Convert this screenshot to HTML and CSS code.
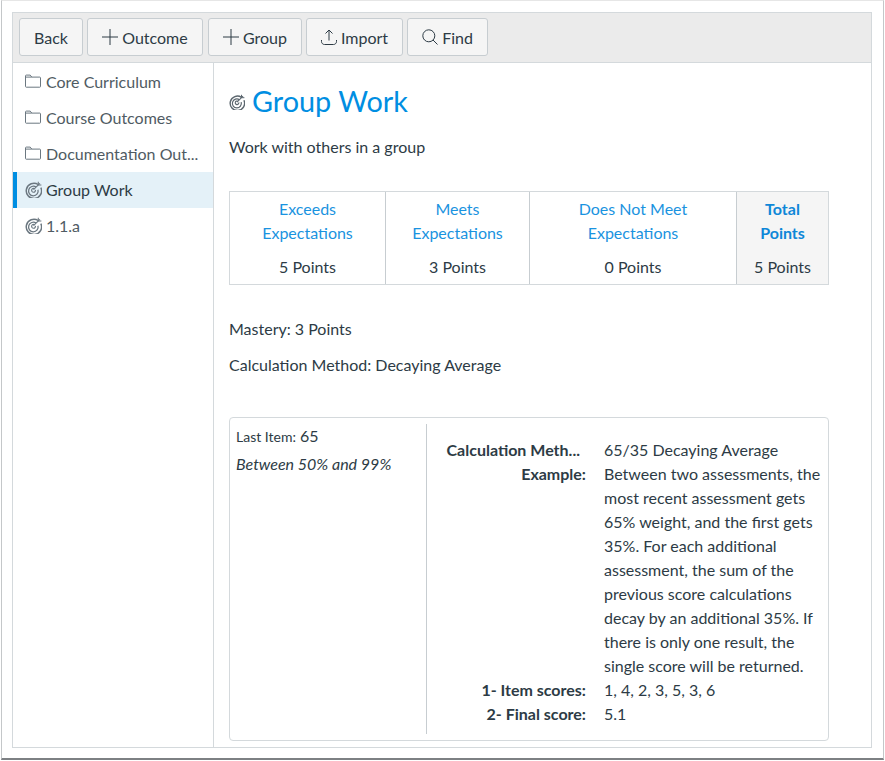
FILE: index.html
```html
<!DOCTYPE html>
<html lang="en">
<head>
<meta charset="utf-8">
<title>Group Work</title>
<link rel="stylesheet" href="styles.css">
</head>
<body>
<svg class="defs" width="0" height="0" aria-hidden="true">
  <symbol id="folder" viewBox="0 0 16 16"><path d="M.5 13.500V2.800c0-.4.3-.7.7-.7h4l1.600 2h8c.4 0 .7.300.7.700v8.700c0 .4-.3.700-.7.700H1.200c-.4 0-.7-.3-.7-.7zM.5 4.100h6.300" fill="none" stroke="currentColor" stroke-width="1"/></symbol>
  <symbol id="target" viewBox="0 0 16 16"><g fill="none" stroke="currentColor"><path d="M12.400 3.300A7.200 7.200 0 1 0 14.900 6.200" stroke-width="1.400"/><path d="M10.400 5.700A4.500 4.500 0 1 0 12.200 8.200" stroke-width="1.200"/><path d="M8.900 7.200A1.800 1.800 0 1 0 9.800 8.400" stroke-width="1.100"/><path d="M8 8.100 14 2.200" stroke-width="1.100"/><path d="M12.500 .8v2.900h2.900" stroke-width="1"/></g></symbol>
</svg>
<div class="frame">
  <div class="app">
    <div class="toolbar">
      <button class="btn btn-back">Back</button>
      <button class="btn btn-outcome"><svg class="btn-icon" viewBox="0 0 16 16"><path d="M8 0v16M0 8h16" stroke="currentColor" fill="none"/></svg>Outcome</button>
      <button class="btn btn-group"><svg class="btn-icon" viewBox="0 0 16 16"><path d="M8 0v16M0 8h16" stroke="currentColor" fill="none"/></svg>Group</button>
      <button class="btn btn-import"><svg class="btn-icon" viewBox="0 0 16 16"><path d="M8 11.500V1M4.500 4.500 8 1l3.500 3.500M.5 11v1.500c0 1.700 1.300 3 3 3h9c1.700 0 3-1.300 3-3V11" stroke="currentColor" fill="none"/></svg>Import</button>
      <button class="btn btn-find"><svg class="btn-icon" viewBox="0 0 16 16"><circle cx="6.800" cy="6.800" r="6" stroke="currentColor" fill="none"/><path d="M11 11l4.500 4.500" stroke="currentColor" fill="none"/></svg>Find</button>
    </div>
    <div class="panes">
      <nav class="sidebar">
        <a class="side-row"><svg class="side-icon"><use href="#folder"/></svg><span class="side-label">Core Curriculum</span></a>
        <a class="side-row"><svg class="side-icon"><use href="#folder"/></svg><span class="side-label">Course Outcomes</span></a>
        <a class="side-row"><svg class="side-icon"><use href="#folder"/></svg><span class="side-label">Documentation Out...</span></a>
        <a class="side-row active"><svg class="side-icon side-target"><use href="#target"/></svg><span class="side-label">Group Work</span></a>
        <a class="side-row"><svg class="side-icon side-target"><use href="#target"/></svg><span class="side-label">1.1.a</span></a>
      </nav>
      <main class="content">
        <h1 class="title"><svg class="title-icon"><use href="#target"/></svg><span>Group Work</span></h1>
        <p class="desc">Work with others in a group</p>
        <div class="ratings">
          <div class="rating r1"><a class="rating-name">Exceeds<br>Expectations</a><span class="rating-pts">5 Points</span></div>
          <div class="rating r2"><a class="rating-name">Meets<br>Expectations</a><span class="rating-pts">3 Points</span></div>
          <div class="rating r3"><a class="rating-name">Does Not Meet<br>Expectations</a><span class="rating-pts">0 Points</span></div>
          <div class="rating r4 total"><a class="rating-name">Total<br>Points</a><span class="rating-pts">5 Points</span></div>
        </div>
        <p class="meta meta-first">Mastery: 3 Points</p>
        <p class="meta">Calculation Method: Decaying Average</p>
        <section class="calc">
          <div class="calc-left">
            <div class="last-item"><span class="last-label">Last Item:</span> 65</div>
            <div class="range">Between 50% and 99%</div>
          </div>
          <div class="calc-right">
            <div class="term term-clip">Calculation Meth...</div><div class="def">65/35 Decaying Average</div>
            <div class="term">Example:</div><div class="def">Between two assessments, the most recent assessment gets 65% weight, and the first gets 35%. For each additional assessment, the sum of the previous score calculations decay by an additional 35%. If there is only one result, the single score will be returned.</div>
            <div class="term">1- Item scores:</div><div class="def">1, 4, 2, 3, 5, 3, 6</div>
            <div class="term">2- Final score:</div><div class="def">5.1</div>
          </div>
        </section>
      </main>
    </div>
  </div>
</div>
</body>
</html>
```

FILE: styles.css
```css
* { box-sizing: border-box; }
html, body { margin: 0; padding: 0; background: #fff; }
body { width: 885px; height: 761px; overflow: hidden; font-family: Lato, "Liberation Sans", sans-serif; font-size: 16px; color: #2d3b45; }
.defs { position: absolute; }
.frame { margin: 0 1px; width: 883px; height: 760px; border: 1px solid #c4c7c9; border-top-color: #e6e6e6; border-bottom: 2px solid #7d8083; padding: 11px 11px 10px 10px; }
.app { height: 736px; border: 1px solid #d4d9dc; display: flex; flex-direction: column; }
.toolbar { height: 50px; flex: none; background: #ebebeb; border-bottom: 1px solid #d4d9dc; display: flex; gap: 4px; padding: 5px 0 0 6px; }
.btn { height: 38px; padding: 0; margin: 0; display: flex; align-items: center; justify-content: center; font: 16px Lato, "Liberation Sans", sans-serif; color: #2d3b45; background: #f5f5f5; border: 1px solid #c7cdd1; border-radius: 3px; }
.btn-back { width: 64px; }
.btn-outcome { width: 116px; margin-right: 1px; }
.btn-group { width: 94px; }
.btn-import { width: 97px; }
.btn-find { width: 81px; }
.btn-icon { width: 16px; height: 16px; margin-right: 4px; flex: none; }
.panes { flex: 1; display: flex; min-height: 0; }
.sidebar { width: 201px; flex: none; border-right: 1px solid #d4d9dc; padding-top: 1px; }
.side-row { height: 36px; display: flex; align-items: center; padding: 0 0 2px 12px; color: #4f5b63; }
.side-row.active { background: #e4f1f8; border-left: 4px solid #008ee2; padding-left: 8px; color: #2d3b45; }
.side-icon { width: 16px; height: 16px; flex: none; margin-right: 5px; color: #6b7780; }
.side-target { width: 17px; height: 17px; margin-right: 4px; }
.side-label { white-space: nowrap; }
.content { flex: 1; padding: 19px 0 0 15px; min-width: 0; }
.title { margin: 0; height: 38px; display: flex; align-items: center; font-size: 28.8px; font-weight: 400; color: #008ee2; line-height: 38px; }
.title-icon { width: 16px; height: 16px; margin: 2px 7px 0 0; color: #5b666e; flex: none; }
.desc { margin: 15px 0 0; line-height: 24px; }
.ratings { margin-top: 32px; width: 600px; height: 94px; display: grid; grid-template-columns: 155px 144px 207px 92px; border: 1px solid #d4d9dc; text-align: center; }
.rating { display: flex; flex-direction: column; align-items: center; padding-top: 5px; border-left: 1px solid #c7cdd1; }
.r1 { border-left: 0; }
.rating-name { color: #1a93e0; line-height: 24px; }
.rating-pts { margin-top: 10px; line-height: 24px; }
.total { background: #f5f5f5; }
.total .rating-name { font-weight: 700; color: #0e87d8; }
.meta { margin: 12px 0 0; line-height: 24px; }
.meta-first { margin-top: 32px; }
.calc { margin-top: 40px; width: 600px; height: 324px; border: 1px solid #d4d9dc; border-radius: 4px; padding: 6px 0 6px 6px; display: flex; }
.calc-left { width: 191px; flex: none; border-right: 1px solid #c7cdd1; }
.last-item { line-height: 24px; }
.last-label { font-size: 14px; }
.range { font-style: italic; line-height: 24px; margin-top: 3px; }
.calc-right { flex: 1; display: grid; grid-template-columns: 159px 1fr; grid-auto-rows: min-content; column-gap: 18px; padding: 14px 7px 0 0; line-height: 24px; }
.term { font-weight: 700; text-align: right; white-space: nowrap; }
.term-clip { padding-right: 6px; }
```
